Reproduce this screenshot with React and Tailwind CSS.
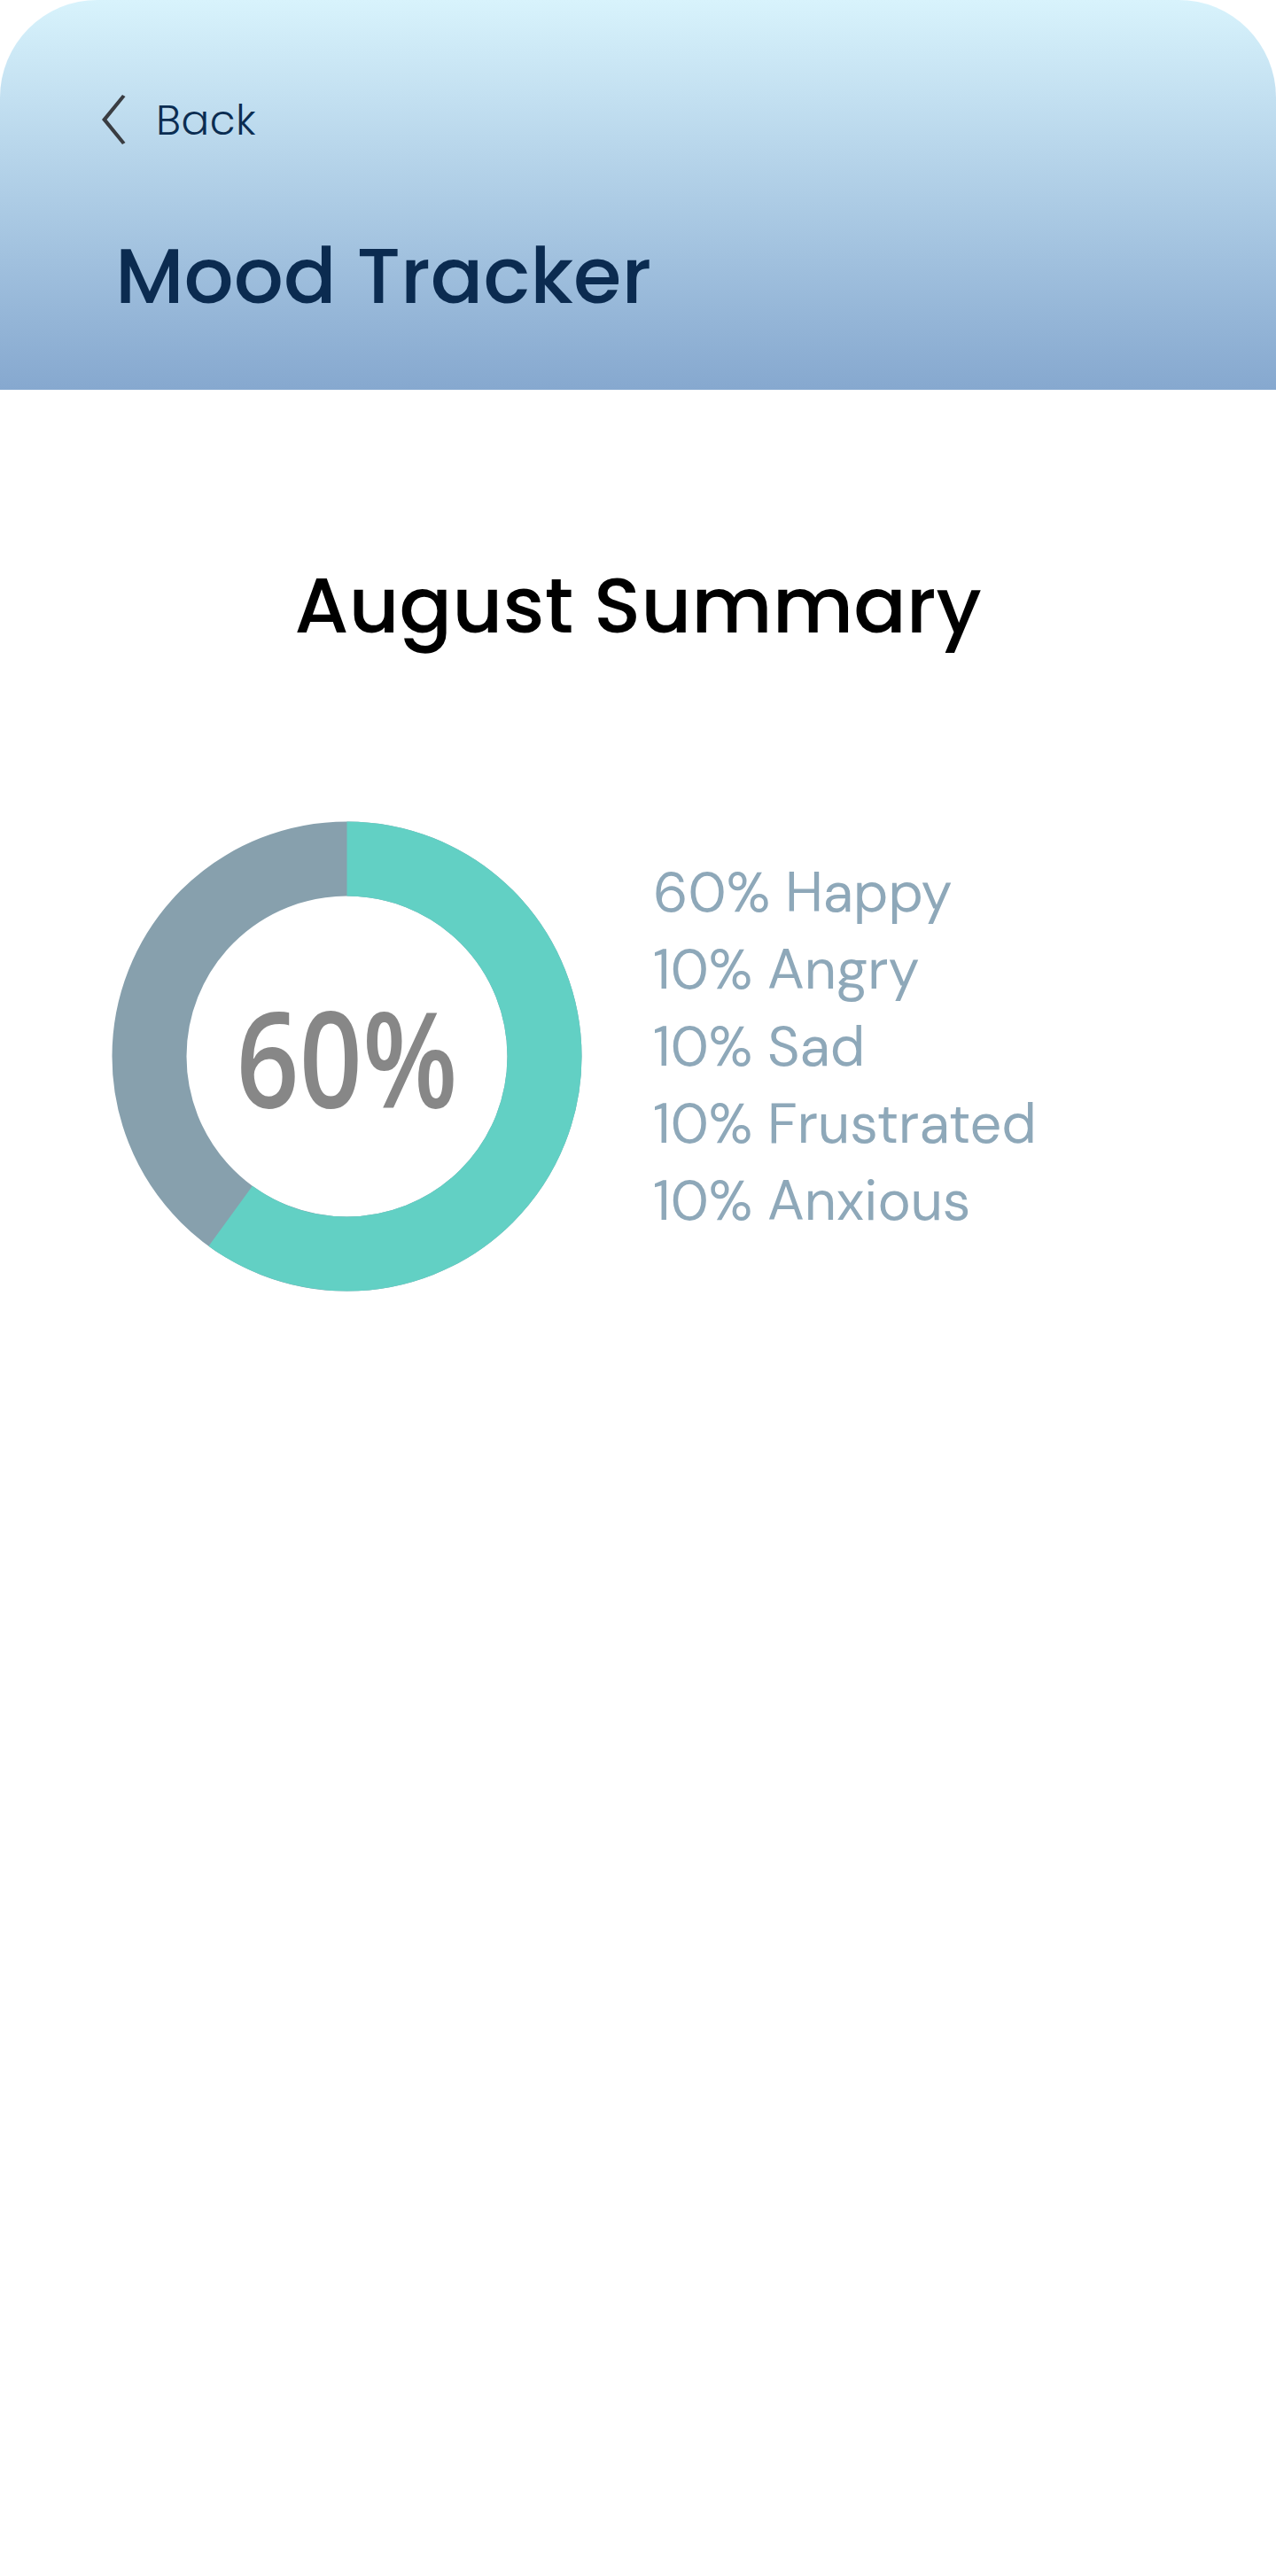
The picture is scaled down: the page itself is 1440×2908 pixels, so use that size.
import React from "react";

const C = 2 * Math.PI * 223;

function Donut() {
  return (
    <div className="relative w-[531px] h-[531px] shrink-0">
      <svg width="531" height="531" viewBox="0 0 531 531" className="block">
        <g transform="rotate(-90 265.5 265.5)">
          <circle cx="265.5" cy="265.5" r="223" fill="none" stroke="#87a0ad" strokeWidth="84" />
          <circle
            cx="265.5"
            cy="265.5"
            r="223"
            fill="none"
            stroke="#62d0c4"
            strokeWidth="84"
            strokeDasharray={`${C * 0.6} ${C}`}
          />
        </g>
      </svg>
      <div className="absolute inset-0 flex items-center justify-center">
        <span className="text-[150px] leading-none font-semibold text-[#878787] scale-x-[0.83] [font-family:'Segoe_UI','Open_Sans',sans-serif]">
          60%
        </span>
      </div>
    </div>
  );
}

export default function App() {
  const legend = ["60% Happy", "10% Angry", "10% Sad", "10% Frustrated", "10% Anxious"];
  return (
    <div className="w-[1440px] min-h-[2908px] bg-white [font-family:'Poppins','Inter',sans-serif]">
      <header className="h-[440px] rounded-t-[110px] bg-gradient-to-b from-[#d8f3fc] to-[#86a8cf] pt-[106px]">
        <div className="flex items-center pl-[115px] h-[58px]">
          <svg width="27" height="56" viewBox="0 0 27 56" className="block">
            <polygon points="23,0 26.5,2 5.5,28 26.5,54 23,56 0,28" fill="#3a3d42" />
          </svg>
          <span className="ml-[34px] text-[47px] font-light leading-none text-[#0b2d52] tracking-[0.5px]">Back</span>
        </div>
        <h1 className="pl-[130px] mt-[104px] text-[88px] leading-none font-medium text-[#0b2b50]">
          Mood Tracker
        </h1>
      </header>
      <main>
        <h2 className="text-center mt-[200px] text-[88px] leading-none font-medium text-black">
          August Summary
        </h2>
        <div className="flex items-center mt-[199px] pl-[126px]">
          <Donut />
          <ul className="ml-[80px] text-[63px] leading-[87px] text-[#8ea8b9] [font-family:'DM_Sans','Inter',sans-serif] -mt-[20px]">
            {legend.map((t) => (
              <li key={t}>{t}</li>
            ))}
          </ul>
        </div>
      </main>
    </div>
  );
}
